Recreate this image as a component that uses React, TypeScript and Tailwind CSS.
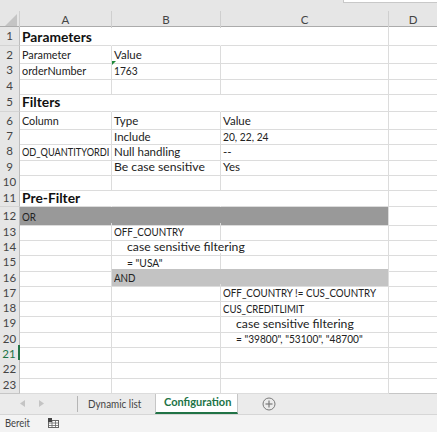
import React from "react";

type Cell = {
  t?: string;
  bold?: boolean;
  indent?: boolean;
  hideR?: boolean;
  bg?: string;
  clip?: boolean;
  mark?: boolean;
  sx?: string;
};

type Row = { n: number; h: string; cells: [Cell, Cell, Cell] };

const NH = "h-[15.3px]";
const TH = "h-[19px]";

const CAPS = "scale-x-[0.85]";
const DIG = "scale-x-[0.89]";
const LOW = "scale-x-[0.94]";
const WIDE = "scale-x-[1.06]";

const rows: Row[] = [
  { n: 1, h: TH, cells: [{ t: "Parameters", bold: true, hideR: true }, { hideR: true }, {}] },
  { n: 2, h: NH, cells: [{ t: "Parameter", sx: LOW }, { t: "Value" }, {}] },
  { n: 3, h: NH, cells: [{ t: "orderNumber", sx: LOW }, { t: "1763", mark: true, sx: DIG }, {}] },
  { n: 4, h: NH, cells: [{}, {}, {}] },
  { n: 5, h: "h-[20px]", cells: [{ t: "Filters", bold: true, hideR: true }, { hideR: true }, {}] },
  { n: 6, h: NH, cells: [{ t: "Column", sx: LOW }, { t: "Type" }, { t: "Value" }] },
  { n: 7, h: NH, cells: [{}, { t: "Include" }, { t: "20, 22, 24", sx: DIG }] },
  { n: 8, h: NH, cells: [{ t: "OD_QUANTITYORDI", clip: true, sx: "scale-x-[0.8]" }, { t: "Null handling" }, { t: "--" }] },
  { n: 9, h: NH, cells: [{}, { t: "Be case sensitive", sx: WIDE }, { t: "Yes" }] },
  { n: 10, h: NH, cells: [{}, {}, {}] },
  { n: 11, h: TH, cells: [{ t: "Pre-Filter", bold: true, hideR: true }, { hideR: true }, {}] },
  { n: 12, h: NH, cells: [{ t: "OR", bg: "bg-[#999999]", hideR: true, sx: CAPS }, { bg: "bg-[#999999]", hideR: true }, { bg: "bg-[#999999]" }] },
  { n: 13, h: NH, cells: [{}, { t: "OFF_COUNTRY", sx: CAPS }, {}] },
  { n: 14, h: NH, cells: [{}, { t: "case sensitive filtering", indent: true, hideR: true, sx: WIDE }, {}] },
  { n: 15, h: NH, cells: [{}, { t: '= "USA"', indent: true, sx: DIG }, {}] },
  { n: 16, h: NH, cells: [{}, { t: "AND", bg: "bg-[#c3c3c3]", hideR: true, sx: CAPS }, { bg: "bg-[#c3c3c3]" }] },
  { n: 17, h: NH, cells: [{}, {}, { t: "OFF_COUNTRY != CUS_COUNTRY", sx: CAPS }] },
  { n: 18, h: NH, cells: [{}, {}, { t: "CUS_CREDITLIMIT", sx: "scale-x-[0.83]" }] },
  { n: 19, h: NH, cells: [{}, {}, { t: "case sensitive filtering", indent: true, sx: WIDE }] },
  { n: 20, h: NH, cells: [{}, {}, { t: '= "39800", "53100", "48700"', indent: true, sx: "scale-x-[0.88]" }] },
  { n: 21, h: NH, cells: [{}, {}, {}] },
  { n: 22, h: NH, cells: [{}, {}, {}] },
  { n: 23, h: NH, cells: [{}, {}, {}] },
];

const GRID = "grid grid-cols-[20px_92px_109px_168px_48px]";
const FONT = "font-['Lato','Open_Sans',sans-serif]";

function DataCell({ c }: { c: Cell }) {
  return (
    <div
      className={[
        "relative flex items-center whitespace-nowrap border-b border-r border-b-[#dcdcdc]",
        c.hideR ? "border-r-transparent" : "border-r-[#dcdcdc]",
        c.bg ?? "",
        c.clip ? "overflow-hidden" : "overflow-visible",
        c.indent ? "pl-[15px]" : "pl-[2px]",
        c.bold ? "text-[13.8px] font-bold text-[#111]" : "text-[11.5px] text-[#222]",
      ].join(" ")}
    >
      {c.mark && (
        <span className="absolute left-0 top-0 h-0 w-0 border-r-[4px] border-t-[4px] border-r-transparent border-t-[#1e8a3a]" />
      )}
      {c.t && (
        <span className={`inline-block origin-left pt-[1px] leading-none ${c.sx ?? ""}`}>{c.t}</span>
      )}
    </div>
  );
}

export default function App() {
  return (
    <div className={`flex h-[432px] w-[437px] flex-col overflow-hidden bg-white ${FONT}`}>
      {/* top strip */}
      <div className="flex h-[11px] justify-end bg-[#e6e6e6]">
        <div className="h-[3px] w-[94px] border-b border-l border-[#c8c8c8] bg-white" />
      </div>
      {/* column header */}
      <div className={`${GRID} h-[16px] border-b border-[#ababab] bg-[#e6e6e6] text-[11.5px] text-[#444]`}>
        <div className="flex items-end justify-end border-r border-[#cfcfcf] pb-[2px] pr-[2px]">
          <svg width="12" height="12" viewBox="0 0 12 12">
            <polygon points="12,0 12,12 0,12" fill="#c4c4c4" />
          </svg>
        </div>
        <div className="flex items-center justify-center border-r border-[#cfcfcf]">A</div>
        <div className="flex items-center justify-center border-r border-[#cfcfcf]">B</div>
        <div className="flex items-center justify-center border-r border-[#cfcfcf]">C</div>
        <div className="flex items-center justify-center">D</div>
      </div>
      {/* rows */}
      {rows.map((r) => (
        <div key={r.n} className={`${GRID} ${r.h}`}>
          <div
            className={[
              "flex items-center justify-center border-b border-r border-b-[#d4d4d4] bg-[#e6e6e6] text-[11.5px]",
              r.n === 21 ? "border-r-2 border-r-[#217346] text-[#217346]" : "border-r-[#bdbdbd] text-[#444]",
            ].join(" ")}
          >
            {r.n}
          </div>
          {r.cells.map((c, i) => (
            <DataCell key={i} c={c} />
          ))}
          <div className="border-b border-[#dcdcdc]" />
        </div>
      ))}
      {/* partial row */}
      <div className={`${GRID} h-[2px]`}>
        <div className="border-r border-[#bdbdbd] bg-[#e6e6e6]" />
        <div className="border-r border-[#dcdcdc]" />
        <div className="border-r border-[#dcdcdc]" />
        <div className="border-r border-[#dcdcdc]" />
        <div />
      </div>
      {/* tab bar */}
      <div className="flex h-[21px] items-stretch border-t border-[#c6c6c6] bg-[#ebebeb] text-[11px]">
        <div className="flex w-[77px] items-center gap-[14px] pl-[20px]">
          <svg width="5" height="7" viewBox="0 0 5 7">
            <polygon points="5,0 5,7 0,3.5" fill="#c4c4c4" />
          </svg>
          <svg width="5" height="7" viewBox="0 0 5 7">
            <polygon points="0,0 0,7 5,3.5" fill="#c4c4c4" />
          </svg>
        </div>
        <div className="my-[2px] w-px bg-[#b5b5b5]" />
        <div className="flex w-[77px] items-center pl-[10px] text-[#444]">
          <span className="inline-block origin-left scale-x-[0.9]">Dynamic list</span>
        </div>
        <div className="-mt-px flex w-[83px] items-center border-x border-b-2 border-x-[#c6c6c6] border-b-[#217346] bg-white pl-[8px] font-bold text-[#217346]">
          Configuration
        </div>
        <div className="flex items-center pl-[24px]">
          <svg width="14" height="14" viewBox="0 0 14 14">
            <circle cx="7" cy="7" r="6" fill="none" stroke="#7a7a7a" strokeWidth="1" />
            <line x1="7" y1="3.5" x2="7" y2="10.5" stroke="#7a7a7a" strokeWidth="1.2" />
            <line x1="3.5" y1="7" x2="10.5" y2="7" stroke="#7a7a7a" strokeWidth="1.2" />
          </svg>
        </div>
      </div>
      {/* status bar */}
      <div className="flex flex-1 items-center gap-[15px] border-t border-[#d6d6d6] bg-[#f3f3f3] pl-[5px] text-[10.5px] text-[#444]">
        <span className="inline-block origin-left scale-x-[0.9]">Bereit</span>
        <svg width="11" height="10" viewBox="0 0 11 10">
          <rect x="0.5" y="2.5" width="10" height="7" fill="white" stroke="#666" strokeWidth="1" />
          <line x1="0.5" y1="5" x2="10.5" y2="5" stroke="#666" strokeWidth="0.8" />
          <line x1="0.5" y1="7.5" x2="10.5" y2="7.5" stroke="#666" strokeWidth="0.8" />
          <line x1="4" y1="2.5" x2="4" y2="9.5" stroke="#666" strokeWidth="0.8" />
          <line x1="7.5" y1="2.5" x2="7.5" y2="9.5" stroke="#666" strokeWidth="0.8" />
          <rect x="0" y="0" width="4" height="4" fill="#444" />
        </svg>
      </div>
    </div>
  );
}
